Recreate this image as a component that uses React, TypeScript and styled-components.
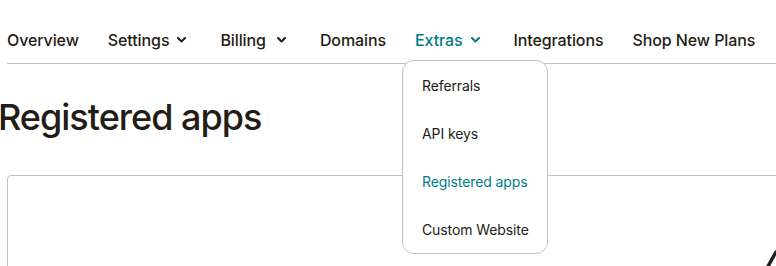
import React from 'react';
import styled, { createGlobalStyle } from 'styled-components';

const GlobalStyle = createGlobalStyle`
  html, body {
    margin: 0;
    padding: 0;
    background: #ffffff;
    overflow: hidden;
  }
  body {
    font-family: Inter, "Liberation Sans", Arial, sans-serif;
    color: #241c15;
  }
`;

const colors = {
  text: '#241c15',
  teal: '#007c89',
  line: '#c2c2c2',
};

type NavItemData = {
  label: string;
  dropdown?: boolean;
  active?: boolean;
  chevronGap?: number;
};

const navItems: NavItemData[] = [
  { label: 'Overview' },
  { label: 'Settings', dropdown: true, chevronGap: 8 },
  { label: 'Billing', dropdown: true, chevronGap: 11 },
  { label: 'Domains' },
  { label: 'Extras', dropdown: true, active: true, chevronGap: 8 },
  { label: 'Integrations' },
  { label: 'Shop New Plans' },
];

const extrasMenu = [
  { label: 'Referrals' },
  { label: 'API keys' },
  { label: 'Registered apps', active: true },
  { label: 'Custom Website' },
];

const Page = styled.div`
  width: 776px;
  height: 266px;
  overflow: hidden;
  position: relative;
`;

const Nav = styled.nav`
  box-sizing: border-box;
  display: flex;
  align-items: flex-start;
  height: 64px;
  margin-left: 7px;
  padding-top: 30px;
  border-bottom: 1px solid ${colors.line};
`;

const NavItem = styled.div<{ $active?: boolean }>`
  position: relative;
  display: flex;
  align-items: center;
  margin-right: 29px;
  font-size: 16px;
  font-weight: 500;
  letter-spacing: -0.1px;
  color: ${({ $active }) => ($active ? colors.teal : colors.text)};
  white-space: nowrap;
`;

const Chevron = styled.svg<{ $gap: number }>`
  width: 9px;
  height: 6px;
  margin-left: ${({ $gap }) => $gap}px;
  margin-right: 5px;
  flex-shrink: 0;
`;

const Dropdown = styled.ul`
  position: absolute;
  top: 30px;
  left: -13px;
  width: 144px;
  height: 192px;
  margin: 0;
  padding: 0;
  list-style: none;
  background: #ffffff;
  border: 1px solid ${colors.line};
  border-radius: 12px;
  display: flex;
  flex-direction: column;
  z-index: 2;
`;

const DropdownItem = styled.li<{ $active?: boolean }>`
  height: 48px;
  display: flex;
  align-items: center;
  padding-left: 19px;
  font-size: 14px;
  font-weight: 400;
  color: ${({ $active }) => ($active ? colors.teal : colors.text)};
  white-space: nowrap;
`;

const Heading = styled.h1`
  margin: 31px 0 0 -2px;
  font-size: 36px;
  font-weight: 500;
  letter-spacing: -1px;
  line-height: 44px;
  color: ${colors.text};
`;

const Card = styled.section`
  position: relative;
  margin: 36px 0 0 7px;
  height: 200px;
  width: 900px;
  border: 1px solid ${colors.line};
  border-radius: 4px;
`;

// dark stroke peeking in at the bottom-right corner of the card
const CornerMark = styled.svg`
  position: absolute;
  left: 745px;
  top: 74px;
`;

const ChevronIcon: React.FC<{ gap: number }> = ({ gap }) => (
  <Chevron $gap={gap} viewBox="0 0 9 6">
    <path d="M1 1l3.5 3.5L8 1" fill="none" stroke="currentColor" strokeWidth="2" strokeLinecap="round" strokeLinejoin="round" />
  </Chevron>
);

export default function App() {
  return (
    <Page>
      <GlobalStyle />
      <Nav>
        {navItems.map((item) => (
          <NavItem key={item.label} $active={item.active}>
            {item.label}
            {item.dropdown && <ChevronIcon gap={item.chevronGap ?? 6} />}
            {item.label === 'Extras' && (
              <Dropdown>
                {extrasMenu.map((m) => (
                  <DropdownItem key={m.label} $active={m.active}>
                    {m.label}
                  </DropdownItem>
                ))}
              </Dropdown>
            )}
          </NavItem>
        ))}
      </Nav>
      <Heading>Registered apps</Heading>
      <Card>
        <CornerMark width="30" height="30" viewBox="0 0 30 30">
          <path d="M23 2L13 20" stroke="#1f1f1f" strokeWidth="3.5" strokeLinecap="round" />
        </CornerMark>
      </Card>
    </Page>
  );
}
